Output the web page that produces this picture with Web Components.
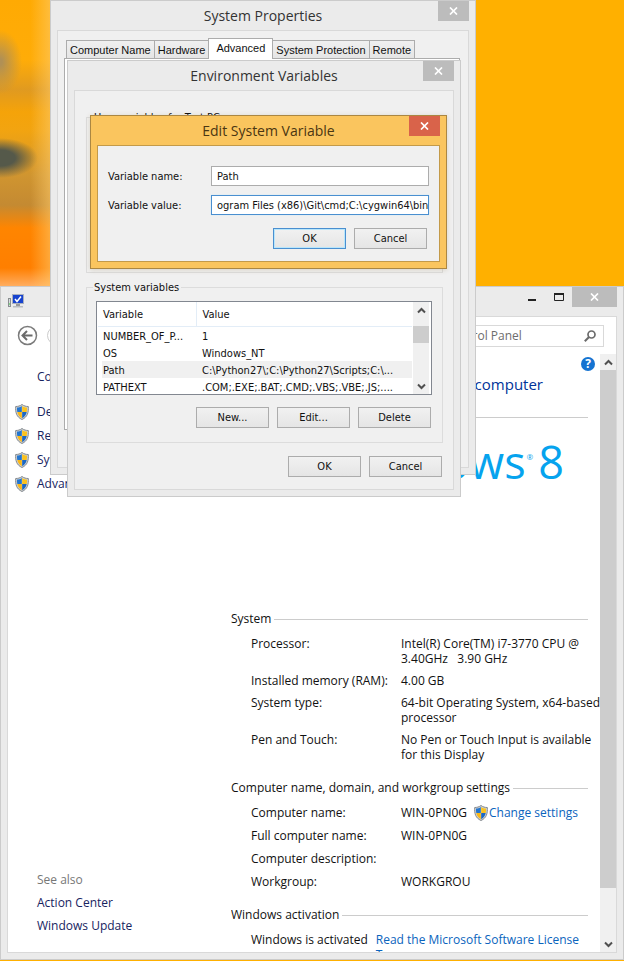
<!DOCTYPE html>
<html lang="en">
<head>
<meta charset="utf-8">
<title>System</title>
<style>
html, body { margin: 0; height: 100%; }
body {
  --ui: "Open Sans", "Noto Sans", sans-serif;
  --dlg: "DejaVu Sans Condensed", "DejaVu Sans", sans-serif;
  --classic: "Liberation Sans", Arial, sans-serif;
  font: 12px/15px var(--ui);
  color: #111;
  overflow: hidden;
}
</style>
</head>
<body>
<desk-top>
  <app-window class="main" heading="" kind="system">
    <system-icon slot="icon"></system-icon>
    <system-page></system-page>
  </app-window>
  <app-window class="props" heading="System Properties">
    <properties-page></properties-page>
  </app-window>
  <app-window class="env" heading="Environment Variables">
    <environment-page></environment-page>
  </app-window>
  <app-window class="edit" heading="Edit System Variable" kind="active">
    <edit-form></edit-form>
  </app-window>
</desk-top>
<script>
const define = (name, html, setup) => {
  const tpl = document.createElement('template');
  tpl.innerHTML = html;
  customElements.define(name, class extends HTMLElement {
    constructor() {
      super();
      this.attachShadow({ mode: 'open' }).append(tpl.content.cloneNode(true));
    }
    connectedCallback() { if (setup) setup(this, this.shadowRoot); }
  });
};

define('desk-top', `
<style>
:host { display: block; position: relative; height: 100vh; overflow: hidden; background: #ffb000; }
.blur { position: absolute; left: 0; top: 0; width: 51px; height: 286px; overflow: hidden;
  background:
    linear-gradient(90deg, transparent 60%, rgba(255,205,110,.55)),
    radial-gradient(ellipse 38px 20px at 0 158px, #55594a 40%, transparent),
    radial-gradient(ellipse 22px 32px at 0 62px, #b09055 10%, transparent),
    linear-gradient(#ffaa03 0, #ffac08 60px, #e09a20 90px, #f5a309 112px, #f2a410 130px, #d09530 175px, #c48a32 205px, #ff8500 228px, #ff7f00 268px, #ffad60 286px); }
::slotted(app-window) { position: absolute; }
::slotted(.main) { left: 0; right: 0; top: 286px; bottom: 1px; }
::slotted(.props) { left: 50px; top: 0; width: 426px; }
::slotted(.env) { left: 67px; top: 60px; width: 394px; }
::slotted(.edit) { left: 90px; top: 115px; width: 357px; }
</style>
<div class="blur"></div><slot></slot>`);

define('app-window', `
<style>
:host { box-sizing: border-box; display: flex; flex-direction: column; padding: 0 6px 6px;
  border: 1px solid #cbcbcb; background: #ebebeb; --x: #bcbcbc; --edge: #d9d9d9; --body: #f0f0f0; }
:host([kind=active]) { background: #fac55e; border-color: #ab8742; --x: #d9634a; --edge: #c39a49;
  box-shadow: 0 1px 5px rgba(120,90,30,.2); }
:host([kind=system]) { --body: #fff; }
header { display: grid; grid-template-columns: 1fr auto 1fr; height: 29px; align-items: start; }
h1 { margin: 5px 0 0; font: 14px/20px var(--ui); color: #333; white-space: nowrap; }
:host([kind=active]) h1 { color: #4a3612; }
.controls { display: flex; justify-content: flex-end; }
button { border: 0; padding: 0; width: 31px; height: 20px; background: none; display: grid; place-items: center; }
.close { background: var(--x); }
.min, .max { display: none; width: 27px; }
:host([kind=system]) .min, :host([kind=system]) .max { display: grid; }
:host([kind=system]) .close { width: 45px; }
main { flex: 1; min-height: 0; border: 1px solid var(--edge); background: var(--body); display: flex; flex-direction: column; }
</style>
<header>
  <slot name="icon"><span></span></slot>
  <h1></h1>
  <div class="controls">
    <button class="min" aria-label="Minimize"><svg width="10" height="10"><path d="M1 8H9" stroke="#222" stroke-width="2"/></svg></button>
    <button class="max" aria-label="Maximize"><svg width="10" height="8"><path d="M.5 1V7.500H9.500V1" fill="none" stroke="#222"/><path d="M0 1H10" stroke="#222" stroke-width="2"/></svg></button>
    <button class="close" aria-label="Close"><svg width="9" height="8"><path d="M1 .5L8 7.500M8 .5L1 7.500" stroke="#fff" stroke-width="1.700"/></svg></button>
  </div>
</header>
<main><slot></slot></main>`, (el, root) => {
  root.querySelector('h1').textContent = el.getAttribute('heading');
});

define('system-icon', `
<style>:host { display: block; padding: 7px 0 0 1px; } svg { display: block; }</style>
<svg width="17" height="16" viewBox="0 0 17 16">
  <rect x=".5" y="4.500" width="2" height="8" fill="#d8dde0" stroke="#8a8f90"/><path d="M1 10h1" stroke="#3c3"/>
  <rect x="4.500" y=".5" width="11" height="9" fill="#1743cf" stroke="#a9b0bd"/>
  <path d="M7 5l2 2.500 4-5" fill="none" stroke="#fff" stroke-width="1.500"/>
  <path d="M8 10h4v2H8z" fill="#999"/><path d="M5 12h10v1.500H5z" fill="#b8bcc0"/>
</svg>`);

define('shield-icon', `
<style>:host { display: inline-block; width: 14px; height: 16px; } svg { display: block; }</style>
<svg width="14" height="16" viewBox="0 0 14 16">
  <path d="M7 .5C5 2 3 2.500.7 2.500.3 8.500 1.500 13 7 15.500 12.500 13 13.700 8.500 13.300 2.500 11 2.500 9 2 7 .5z" fill="#d0d3d6" stroke="#83898e"/>
  <path d="M6.800 2C5.300 3 3.800 3.500 2 3.600 1.900 5.300 2 6.800 2.300 8h4.500z" fill="#2476cf"/>
  <path d="M7.200 2C8.700 3 10.200 3.500 12 3.600 12.100 5.300 12 6.800 11.700 8H7.200z" fill="#fcc21c"/>
  <path d="M2.300 8c.6 2.800 2 4.800 4.500 6.200V8z" fill="#fcb813"/>
  <path d="M11.700 8c-.6 2.800-2 4.800-4.500 6.200V8z" fill="#1c68c4"/>
</svg>`);

define('push-button', `
<style>
:host { display: block; }
button { display: block; box-sizing: border-box; width: 73px; height: 21px; padding: 1px 0 0; border: 1px solid #acacac;
  background: linear-gradient(#f1f1f1, #e5e5e5); color: #111; font: 11px/18px var(--dlg); text-align: center; }
:host([primary]) button { border-color: #4a8fd0; box-shadow: inset 0 0 0 1px #b9e6fb; }
</style>
<button type="button"><slot></slot></button>`);

define('scroll-bar', `
<style>
:host { display: flex; flex-direction: column; width: 16px; background: #f0f0f0; }
button { border: 0; padding: 0; height: 16px; background: none; display: grid; place-items: center; }
.thumb { height: var(--thumb, 17px); background: #cdcdcd; }
.gap { flex: 1; }
.lead { height: var(--lead, 0px); }
</style>
<button aria-label="Scroll up"><svg width="9" height="7"><path d="M1 5.500L4.500 2 8 5.500" fill="none" stroke="#505050" stroke-width="2"/></svg></button>
<div class="lead"></div><div class="thumb"></div><div class="gap"></div>
<button aria-label="Scroll down"><svg width="9" height="7"><path d="M1 1.500L4.500 5 8 1.500" fill="none" stroke="#505050" stroke-width="2"/></svg></button>`);

define('properties-page', `
<style>
:host { display: block; padding: 7px 8px 37px 6px; font: 11px/15px var(--classic); }
.tabs { display: flex; align-items: flex-end; padding-left: 2px; height: 20px; }
button { box-sizing: border-box; height: 18px; border: 1px solid #acacac; border-bottom: 0; margin: 0; padding: 1px 3px 0;
  background: linear-gradient(#f0f0f0, #e5e5e5); font: inherit; color: #111; white-space: nowrap; }
button + button { border-left-width: 0; }
button[aria-selected=true] { height: 21px; margin-bottom: -1px; padding: 0 7px 2px; background: #fff; border-left-width: 1px; margin-left: -1px; }
.page { height: 370px; border: 1px solid #acacac; background: #fff; }
</style>
<div class="tabs" role="tablist">
  <button role="tab">Computer Name</button><button role="tab">Hardware</button><button role="tab" aria-selected="true">Advanced</button><button role="tab">System Protection</button><button role="tab">Remote</button>
</div>
<div class="page" role="tabpanel"></div>`);

define('group-box', `
<style>
:host { display: block; }
fieldset { box-sizing: border-box; min-height: 165px; margin: 0; min-width: 0; border: 1px solid #dcdcdc; padding: 5px 10px 14px 9px; }
legend { padding: 2px 2px 0 1px; margin-left: -3px; font: 11px/16px var(--dlg); }
</style>
<fieldset><legend></legend><slot></slot></fieldset>`, (el, root) => {
  root.querySelector('legend').textContent = el.getAttribute('label');
});

define('variable-list', `
<style>
:host { box-sizing: border-box; display: flex; height: 94px; overflow: hidden; border: 1px solid #828790; background: #fff; padding: 0 2px 0 1px; }
table { flex: 1; min-width: 0; table-layout: fixed; border-collapse: collapse; font: 11px/16px var(--dlg); align-self: flex-start; margin-right: 1px; }
th { font-weight: normal; text-align: left; height: 24px; padding: 3px 5px 0; border-bottom: 1px solid #e3edf7; box-sizing: border-box; }
th:first-child { width: 98px; border-right: 1px solid #e3edf7; }
td { height: 17px; line-height: 15px; padding: 2px 5px 0; white-space: nowrap; overflow: hidden; box-sizing: border-box; }
th + th, td + td { padding-left: 6px; }
.sel td { background: #f0f0f0; }
.sel td:first-child { background: linear-gradient(90deg, #fff 4px, #f0f0f0 4px); }
scroll-bar { --lead: 8px; --thumb: 17px; }
</style>
<table>
  <thead><tr><th>Variable</th><th>Value</th></tr></thead>
  <tbody>
    <tr><td>NUMBER_OF_P...</td><td>1</td></tr>
    <tr><td>OS</td><td>Windows_NT</td></tr>
    <tr class="sel"><td>Path</td><td>C:\\Python27\\;C:\\Python27\\Scripts;C:\\...</td></tr>
    <tr><td>PATHEXT</td><td>.COM;.EXE;.BAT;.CMD;.VBS;.VBE;.JS;....</td></tr>
  </tbody>
</table>
<scroll-bar></scroll-bar>`);

define('environment-page', `
<style>
:host { display: block; padding: 17px 10px 12px 11px; }
group-box + group-box { margin-top: 5px; }
.row { display: flex; justify-content: flex-end; gap: 8px; margin-top: 12px; padding-right: 1px; }
.end { margin-top: 13px; }
</style>
<group-box label="User variables for Test PC"></group-box>
<group-box label="System variables">
  <variable-list></variable-list>
  <div class="row"><push-button>New...</push-button><push-button>Edit...</push-button><push-button>Delete</push-button></div>
</group-box>
<div class="row end"><push-button>OK</push-button><push-button>Cancel</push-button></div>`);

define('edit-form', `
<style>
:host { display: block; padding: 20px 10px 12px; font: 11px/18px var(--dlg); }
form { display: grid; grid-template-columns: 103px 1fr; row-gap: 9px; }
label { padding-top: 2px; }
input { box-sizing: border-box; width: 100%; height: 20px; margin: 0; border: 1px solid #acacac; padding: 1px 0 0 5px; font: inherit; line-height: 17px; color: #111; background: #fff; outline: 0; border-radius: 0; }
#value { border-color: #4a8fd0; box-shadow: 0 0 1px #b9e6fb; }
.row { display: flex; justify-content: flex-end; gap: 8px; margin-top: 13px; padding-right: 2px; }
</style>
<form>
  <label for="name">Variable name:</label><input id="name" value="Path">
  <label for="value">Variable value:</label><input id="value" value="ogram Files (x86)\\Git\\cmd;C:\\cygwin64\\bin">
</form>
<div class="row"><push-button primary>OK</push-button><push-button>Cancel</push-button></div>`);

define('info-section', `
<style>
:host { display: block; margin-right: 7px; }
h2 { display: flex; align-items: center; gap: 3px; margin: 0 0 10px; font: inherit; white-space: nowrap; }
h2::after { content: ""; flex: 1; height: 1px; background: #ccc; margin-top: 2px; }
.rows { display: grid; gap: var(--gap, 8px); padding-left: 20px; }
</style>
<h2></h2><div class="rows"><slot></slot></div>`, (el, root) => {
  root.querySelector('h2').textContent = el.getAttribute('label');
});

define('info-row', `
<style>
:host { display: grid; grid-template-columns: 150px 1fr; min-height: 15px; white-space: nowrap; }
div { min-width: 0; }
</style>
<span></span><div><slot></slot></div>`, (el, root) => {
  root.querySelector('span').textContent = el.getAttribute('label');
});

define('system-page', `
<style>
:host { flex: 1; min-height: 0; display: flex; flex-direction: column; font: 12px/15px var(--ui); }
a { color: #0a64bd; text-decoration: none; }
.nav { display: flex; align-items: center; height: 37px; padding: 0 12px 0 9px; box-sizing: border-box; gap: 8px; }
.nav button { border: 0; padding: 0; background: none; width: 21px; height: 21px; }
.nav svg { display: block; }
.search { margin-left: auto; display: flex; align-items: center; box-sizing: border-box; width: 207px; height: 22px; border: 1px solid #d9d9d9; padding: 0 7px; }
.search input { flex: 1; min-width: 0; border: 0; padding: 0; outline: 0; font: inherit; color: #6d6d6d; background: none; }
.pane { flex: 1; min-height: 0; display: grid; grid-template: 100% / 223px 1fr 16px; overflow: hidden; }
aside { display: flex; flex-direction: column; padding: 15px 0 19px 7px; gap: 8px; }
aside a, aside p { margin: 0; padding-left: 22px; color: #17245f; white-space: nowrap; }
aside .task { display: flex; gap: 8px; padding-left: 0; line-height: 16px; }
aside .home { margin-bottom: 12px; }
aside .also { margin-top: auto; color: #777; }
article { padding: 3px 5px 0 0; min-width: 0; overflow: hidden; }
.help { display: flex; justify-content: flex-end; }
.help button { border: 0; padding: 0; width: 14px; height: 14px; border-radius: 7px; background: #1573d1; color: #fff; font: bold 12px/14px var(--ui); }
h1 { margin: 3px 8px 23px 0; font: 15px/20px var(--ui); color: #039; white-space: nowrap; }
.logo { margin-right: 7px; border-top: 1px solid #ccc; height: 194px; padding: 14px 24px 0 0; box-sizing: border-box; display: flex; justify-content: flex-end; font: 45px/60px var(--ui); color: #06a3ee; }
.logo sup { font-size: 8px; line-height: 50px; margin: 0 5px 0 1px; }
info-section + info-section { margin-top: 18px; }
.first { --gap: 7px; }
.change { display: inline-flex; gap: 1px; height: 15px; margin-left: 7px; vertical-align: top; }
.act { display: flex; gap: 8px; }
.act span { white-space: nowrap; }
scroll-bar { --thumb: 518px; }
</style>
<div class="nav">
  <button aria-label="Back"><svg width="21" height="21"><circle cx="10.500" cy="10.500" r="9" fill="none" stroke="#7b7b7b" stroke-width="1.500"/><path d="M5.500 10.500H15.500M10 6L5.500 10.500 10 15" fill="none" stroke="#6b6b6b" stroke-width="2"/></svg></button>
  <button aria-label="Forward"><svg width="21" height="21"><circle cx="10.500" cy="10.500" r="9" fill="none" stroke="#ccc"/><path d="M5.500 10.500H15.500M11 6L15.500 10.500 11 15" fill="none" stroke="#ccc" stroke-width="2"/></svg></button>
  <label class="search"><input aria-label="Search" value="Search Control Panel"><svg width="12" height="12"><circle cx="7.500" cy="4.500" r="3.500" fill="none" stroke="#6b6b6b" stroke-width="1.700"/><path d="M5 7L.8 11.200" stroke="#6b6b6b" stroke-width="2"/></svg></label>
</div>
<div class="pane">
  <aside>
    <a class="home" href="#">Control Panel Home</a>
    <a class="task" href="#"><shield-icon></shield-icon>Device Manager</a>
    <a class="task" href="#"><shield-icon></shield-icon>Remote settings</a>
    <a class="task" href="#"><shield-icon></shield-icon>System protection</a>
    <a class="task" href="#"><shield-icon></shield-icon>Advanced system settings</a>
    <p class="also">See also</p>
    <a href="#">Action Center</a>
    <a href="#">Windows Update</a>
  </aside>
  <article>
    <div class="help"><button aria-label="Help">?</button></div>
    <h1>View basic information about your computer</h1>
    <div class="logo">Windows<sup>®</sup>8</div>
    <info-section class="first" label="System">
      <info-row label="Processor:">Intel(R) Core(TM) i7-3770 CPU @<br>3.40GHz &nbsp; 3.90 GHz</info-row>
      <info-row label="Installed memory (RAM):">4.00 GB</info-row>
      <info-row label="System type:">64-bit Operating System, x64-based<br>processor</info-row>
      <info-row label="Pen and Touch:">No Pen or Touch Input is available<br>for this Display</info-row>
    </info-section>
    <info-section label="Computer name, domain, and workgroup settings">
      <info-row label="Computer name:">WIN-0PN0G<a class="change" href="#"><shield-icon></shield-icon>Change settings</a></info-row>
      <info-row label="Full computer name:">WIN-0PN0G</info-row>
      <info-row label="Computer description:"></info-row>
      <info-row label="Workgroup:">WORKGROU</info-row>
    </info-section>
    <info-section label="Windows activation">
      <div class="act"><span>Windows is activated</span><a href="#">Read the Microsoft Software License Terms</a></div>
    </info-section>
  </article>
  <scroll-bar></scroll-bar>
</div>`);
</script>
</body>
</html>
